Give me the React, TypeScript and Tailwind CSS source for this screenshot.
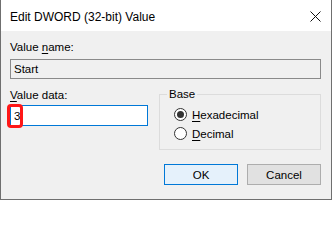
import { useState } from 'react';

const font = { fontFamily: '"Liberation Sans", Arial, sans-serif' };

const Radio = ({ checked, children }: { checked: boolean; children: React.ReactNode }) => (
  <label className="flex items-center h-[19px] gap-[5px]">
    <span className="w-[13px] h-[13px] rounded-full border border-[#333333] bg-white flex items-center justify-center">
      {checked && <span className="w-[7px] h-[7px] rounded-full bg-[#333333]" />}
    </span>
    <span className="text-black">{children}</span>
  </label>
);

export default function App() {
  const [value, setValue] = useState('3');

  return (
    <div
      style={font}
      className="w-[332px] h-[200px] flex flex-col border border-t-0 border-[#6f6f6f] text-[11.5px] leading-[16px] text-black select-none"
    >
      {/* Title bar */}
      <div className="h-[31px] shrink-0 bg-white flex items-center justify-between pl-[9px] pr-[10px]">
        <span className="text-[12px] pt-[2px]">Edit DWORD (32-bit) Value</span>
        <svg width="11" height="11" viewBox="0 0 11 11" className="mt-[2px]">
          <path d="M0.5 0.5 L10.5 10.5 M10.5 0.5 L0.5 10.5" stroke="#111" strokeWidth="1" />
        </svg>
      </div>

      {/* Body */}
      <div className="flex-1 bg-[#f0f0f0] pl-[9px] pr-[10px] pt-[8px]">
        <div>
          Value <span className="underline underline-offset-2">n</span>ame:
        </div>
        <div className="mt-[4px] h-[20px] border border-[#8a8a8a] bg-[#f0f0f0] flex items-center px-[3px]">
          Start
        </div>

        <div className="flex items-start mt-[8px]">
          <div className="w-[138px]">
            <div>
              <span className="underline underline-offset-2">V</span>alue data:
            </div>
            <div className="relative mt-[2px] h-[21px] border border-[#0078d7] bg-white flex items-center px-[3px]">
              <span>{value}</span>
              <span className="w-px h-[13px] bg-black" />
              <span className="absolute left-[-4px] top-[-2px] w-[16px] h-[24px] border-[3px] border-[#ff1717] rounded-[4px]" />
              <input className="hidden" value={value} onChange={(e) => setValue(e.target.value)} />
            </div>
          </div>

          <div className="relative ml-auto mt-[7px] w-[162px] h-[56px] border border-[#dcdcdc] pt-[10px] pl-[14px]">
            <span className="absolute left-[7px] top-[-9px] px-[2px] bg-[#f0f0f0]">Base</span>
            <Radio checked>
              <span className="underline underline-offset-2">H</span>exadecimal
            </Radio>
            <Radio checked={false}>
              <span className="underline underline-offset-2">D</span>ecimal
            </Radio>
          </div>
        </div>

        <div className="flex justify-end gap-[9px] mt-[14px]">
          <button className="w-[74px] h-[21px] border border-[#0078d7] bg-[#e5f1fb] text-black">OK</button>
          <button className="w-[74px] h-[21px] border border-[#adadad] bg-[#e1e1e1] text-black">Cancel</button>
        </div>
      </div>
    </div>
  );
}
